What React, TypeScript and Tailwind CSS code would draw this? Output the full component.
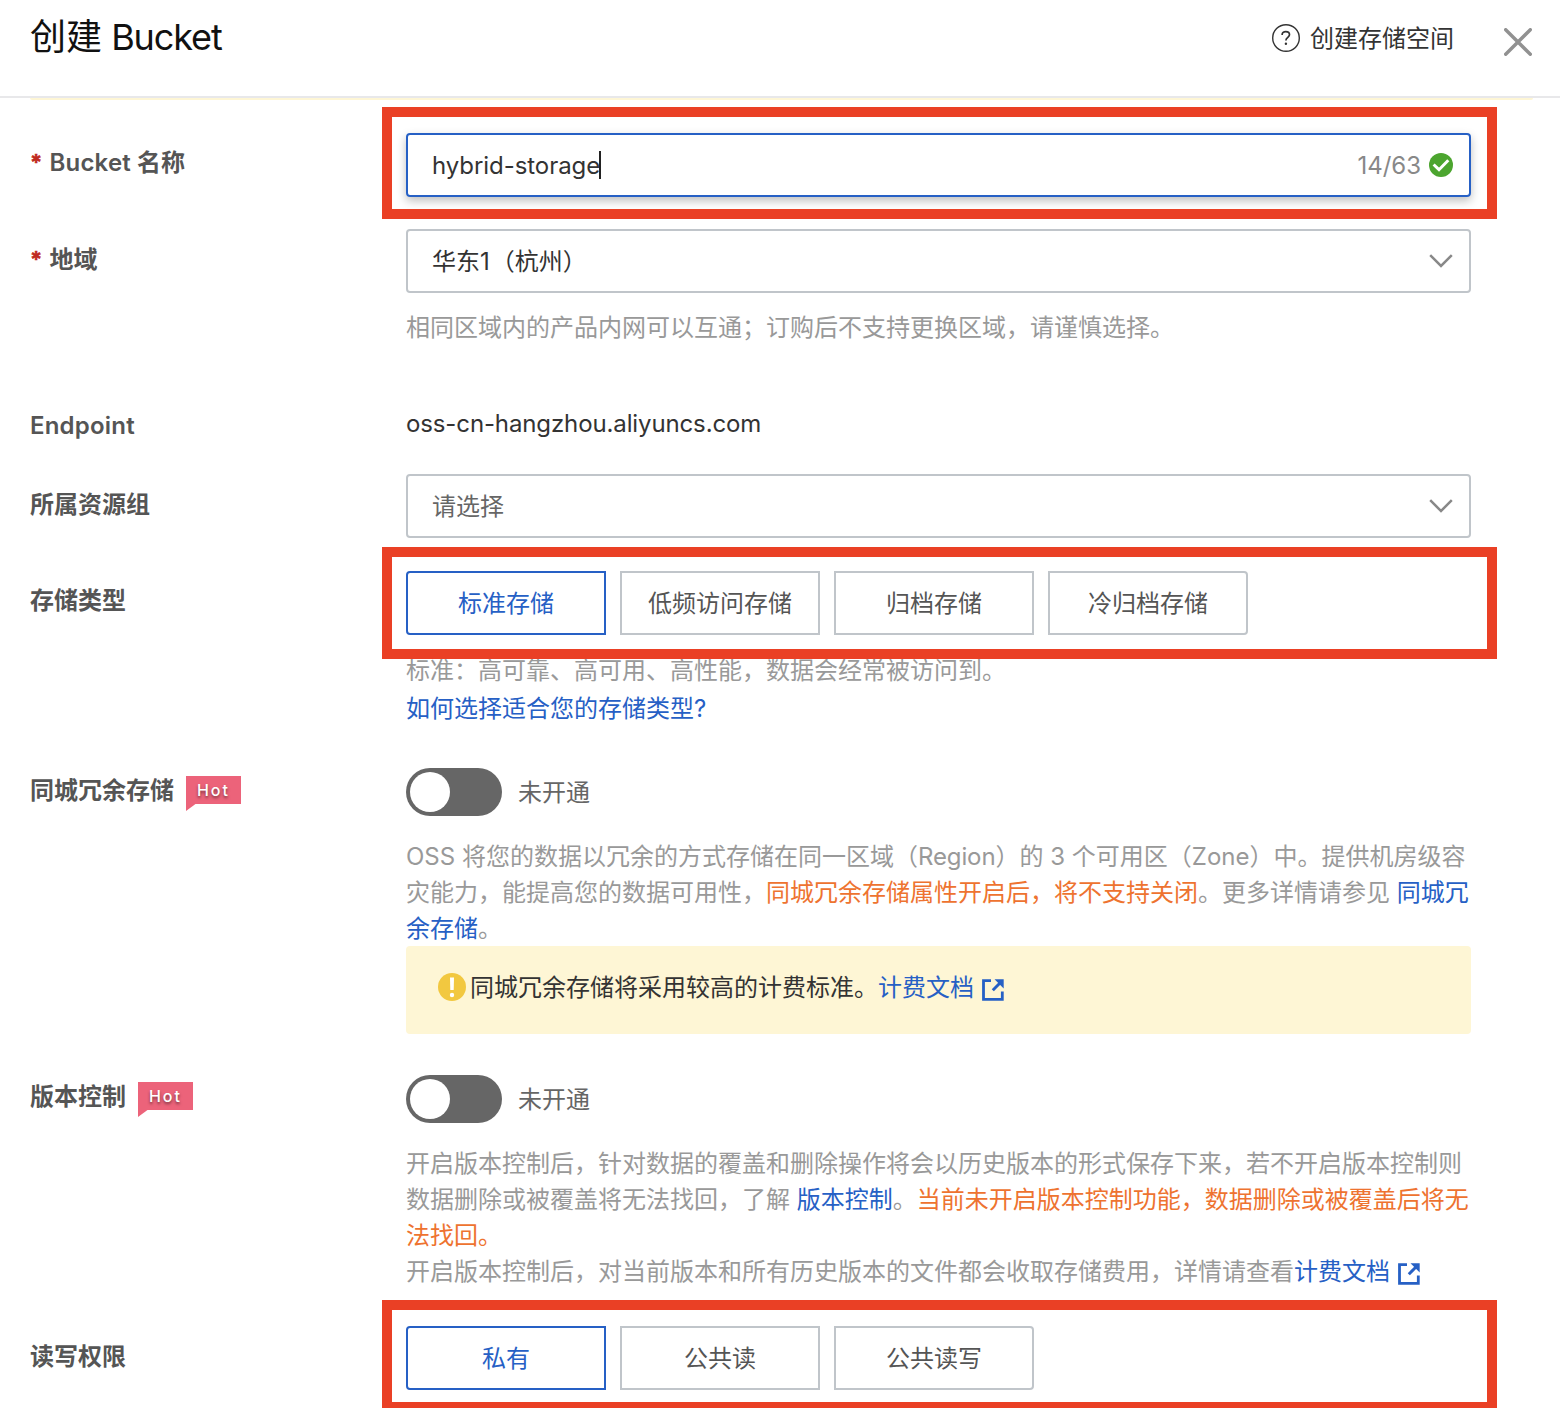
import type { ReactNode } from "react";

const Help = ({ children, className = "" }: { children: ReactNode; className?: string }) => (
  <p className={"whitespace-nowrap leading-9 text-[#999] " + className}>{children}</p>
);

const Link = ({ children }: { children: ReactNode }) => <a className="text-[#2660c5]">{children}</a>;

const Warn = ({ children }: { children: ReactNode }) => <span className="text-[#ee7330]">{children}</span>;

const Highlight = ({ className }: { className: string }) => (
  <div className={"pointer-events-none absolute -left-6 h-28 w-[1115px] border-[10px] border-[#ea4025] " + className} />
);

function Row({
  label,
  required,
  hot,
  className,
  labelClass,
  children,
}: {
  label: ReactNode;
  required?: boolean;
  hot?: boolean;
  className: string;
  labelClass: string;
  children: ReactNode;
}) {
  return (
    <div className={"flex " + className}>
      <div className={"flex h-9 w-[376px] shrink-0 items-start font-semibold leading-9 text-[#555] " + labelClass}>
        {required && (
          <span className="w-[19.5px] text-[22px] font-bold leading-[35px] text-[#bf2a20] [-webkit-text-stroke:0.5px_#bf2a20]">
            *
          </span>
        )}
        <span>{label}</span>
        {hot && <HotBadge />}
      </div>
      <div className="relative w-[1065px] shrink-0">{children}</div>
    </div>
  );
}

const HotBadge = () => (
  <div className="relative ml-3 mt-[3px] h-7 w-[55px] bg-[#ec637a] pl-[11px] text-[16px] font-medium leading-7 tracking-[1.9px] text-white [text-shadow:0_2px_3px_rgba(0,0,0,0.5)]">
    Hot
    <svg className="absolute left-0 top-[27.5px]" width="10" height="8" viewBox="0 0 10 8">
      <path d="M0 0H9.5L0 7z" fill="#ec637a" />
    </svg>
  </div>
);

const Chevron = () => (
  <svg width="24" height="14" viewBox="0 0 24 14" fill="none" stroke="#888" strokeWidth="2.5">
    <path d="M1.2 1.2L12 12L22.8 1.2" />
  </svg>
);

const Select = ({ children, className }: { children: ReactNode; className: string }) => (
  <div
    className={
      "flex h-16 items-center justify-between rounded-[4px] border-2 border-[#c0c5ca] pl-6 pr-4 " + className
    }
  >
    <span className="pt-0.5">{children}</span>
    <Chevron />
  </div>
);

function Options({ items }: { items: string[] }) {
  return (
    <div className="flex gap-[14px]">
      {items.map((t, i) => (
        <button
          key={t}
          className={
            "h-16 w-[200px] border-2 pt-0.5 leading-[58px] " +
            (i === 0
              ? "rounded-l-[4px] border-[#2660c5] text-[#2660c5] "
              : "border-[#c0c5ca] text-[#555] ") +
            (i === items.length - 1 ? "rounded-r-[4px]" : "")
          }
        >
          {t}
        </button>
      ))}
    </div>
  );
}

const Toggle = () => (
  <div className="flex h-12 items-center">
    <div className="h-12 w-24 rounded-full bg-[#666] p-1">
      <div className="h-10 w-10 rounded-full bg-white" />
    </div>
    <span className="ml-4 pt-0.5 text-[#666]">未开通</span>
  </div>
);

const External = () => (
  <svg className="ml-2 inline-block align-[-5px]" width="22" height="22" viewBox="0 0 22 22" fill="none">
    <path d="M9 1.7H1.5V20.3H20.3V12.5" stroke="#2660c5" strokeWidth="2.8" />
    <path d="M10.8 11.2L18.5 3.5" stroke="#2660c5" strokeWidth="3" />
    <path d="M12.5 0.3H21.7V9.5z" fill="#2660c5" />
  </svg>
);

export default function App() {
  return (
    <div className="h-[1408px] w-[1560px] overflow-hidden bg-white font-['Inter','Noto_Sans_CJK_SC',sans-serif] text-[24px] text-[#333]">
      <header className="flex h-[98px] items-start border-b-2 border-[#e8e8ea] pl-[30px]">
        <h1 className="pt-[13px] text-[36px] leading-[48px] text-[#111]">
          创建 <span className="-ml-px tracking-[-1.1px]">Bucket</span>
        </h1>
        <div className="ml-auto flex items-center pt-5">
          <svg width="28" height="28" viewBox="0 0 28 28" fill="none" stroke="#333">
            <circle cx="14" cy="14" r="13.3" strokeWidth="1.4" />
            <path d="M10.1 10.9C10.1 8.8 11.7 7.6 13.8 7.6C15.9 7.6 17.5 8.9 17.5 10.8C17.5 13.3 13.9 13.5 13.9 16.5" strokeWidth="1.7" />
            <circle cx="13.9" cy="19.8" r="1.2" fill="#333" stroke="none" />
          </svg>
          <span className="ml-[10px] h-9 pt-px leading-9">创建存储空间</span>
        </div>
        <svg className="ml-[50px] mr-7 mt-7" width="28" height="28" viewBox="0 0 28 28" stroke="#919191" strokeWidth="3.4" strokeLinecap="round">
          <path d="M1.7 1.7L26.3 26.3M26.3 1.7L1.7 26.3" />
        </svg>
      </header>
      <div className="ml-[30px] h-0.5 w-[1503px] rounded-b-[2px] bg-[#fef6d5]" />

      <main className="pl-[30px] pt-[33px]">
        <Row required label={<><span className="tracking-[0.2px]">Bucket</span> 名称</>} className="h-24" labelClass="pt-3">
          <div className="flex h-16 items-center rounded-[4px] border-2 border-[#2660c5] pl-6 pr-4 shadow-[0_4px_10px_rgba(0,0,0,0.25)]">
            <span className="pt-0.5 tracking-[-0.06px]">hybrid-storage</span>
            <span className="-ml-px h-7 w-0.5 bg-[#222]" />
            <span className="ml-auto pt-0.5 text-[#888]">14/63</span>
            <svg className="ml-2" width="24" height="24" viewBox="0 0 24 24">
              <circle cx="12" cy="12" r="12" fill="#4ca52f" />
              <path d="M4.6 11.5L10 16.7L19.3 7.3" fill="none" stroke="#fff" strokeWidth="3" />
            </svg>
          </div>
          <Highlight className="-top-[26px]" />
        </Row>

        <Row required label="地域" className="h-[177px]" labelClass="pt-[13px]">
          <Select className="text-[#333]">华东1<span className="ml-px">（杭州）</span></Select>
          <Help className="mt-[17px]">相同区域内的产品内网可以互通；订购后不支持更换区域，请谨慎选择。</Help>
        </Row>

        <Row label={<span className="tracking-[0.2px]">Endpoint</span>} className="h-[68px]" labelClass="pt-[2px]">
          <p className="leading-9 tracking-[-0.12px]">oss-cn-hangzhou.aliyuncs.com</p>
        </Row>

        <Row label="所属资源组" className="h-[97px]" labelClass="pt-[13px]">
          <Select className="text-[#666]">请选择</Select>
        </Row>

        <Row label="存储类型" className="h-[197px]" labelClass="pt-3">
          <Options items={["标准存储", "低频访问存储", "归档存储", "冷归档存储"]} />
          <Help className="mt-[18px]">标准：高可靠、高可用、高性能，数据会经常被访问到。</Help>
          <p className="mt-[2px] leading-9"><Link>如何选择适合您的存储类型?</Link></p>
          <Highlight className="-top-6" />
        </Row>

        <Row hot label="同城冗余存储" className="h-[307px]" labelClass="pt-[5px]">
          <Toggle />
          <Help className="mt-[23px]">OSS 将您的数据以冗余的方式存储在同一区域（<span className="tracking-[-0.1px]">Region</span>）的 3 个可用区（Zone）中。提供机房级容</Help>
          <Help>灾能力，能提高您的数据可用性，<Warn>同城冗余存储属性开启后，将不支持关闭</Warn>。更多详情请参见 <Link>同城冗</Link></Help>
          <Help><Link>余存储</Link>。</Help>
          <div className="-mt-px flex h-[88px] items-start rounded-[4px] bg-[#fef6d5] pl-8 pt-6">
            <svg className="mr-1 mt-[3px]" width="28" height="28" viewBox="0 0 28 28">
              <circle cx="14" cy="14" r="14" fill="#f2c840" />
              <path d="M12 4.5H16L15.7 17H12.3z" fill="#fff" />
              <circle cx="14" cy="22" r="2.2" fill="#fff" />
            </svg>
            <p className="leading-9">同城冗余存储将采用较高的计费标准。<Link>计费文档<External /></Link></p>
          </div>
        </Row>

        <Row hot label="版本控制" className="h-[251px]" labelClass="pt-1">
          <Toggle />
          <Help className="mt-[23px]">开启版本控制后，针对数据的覆盖和删除操作将会以历史版本的形式保存下来，若不开启版本控制则</Help>
          <Help>数据删除或被覆盖将无法找回，了解 <Link>版本控制</Link>。<Warn>当前未开启版本控制功能，数据删除或被覆盖后将无</Warn></Help>
          <Help><Warn>法找回。</Warn></Help>
          <Help>开启版本控制后，对当前版本和所有历史版本的文件都会收取存储费用，详情请查看<Link>计费文档<External /></Link></Help>
        </Row>

        <Row label="读写权限" className="h-[82px]" labelClass="pt-[13px]">
          <Options items={["私有", "公共读", "公共读写"]} />
          <Highlight className="-top-[26px]" />
        </Row>
      </main>
    </div>
  );
}
